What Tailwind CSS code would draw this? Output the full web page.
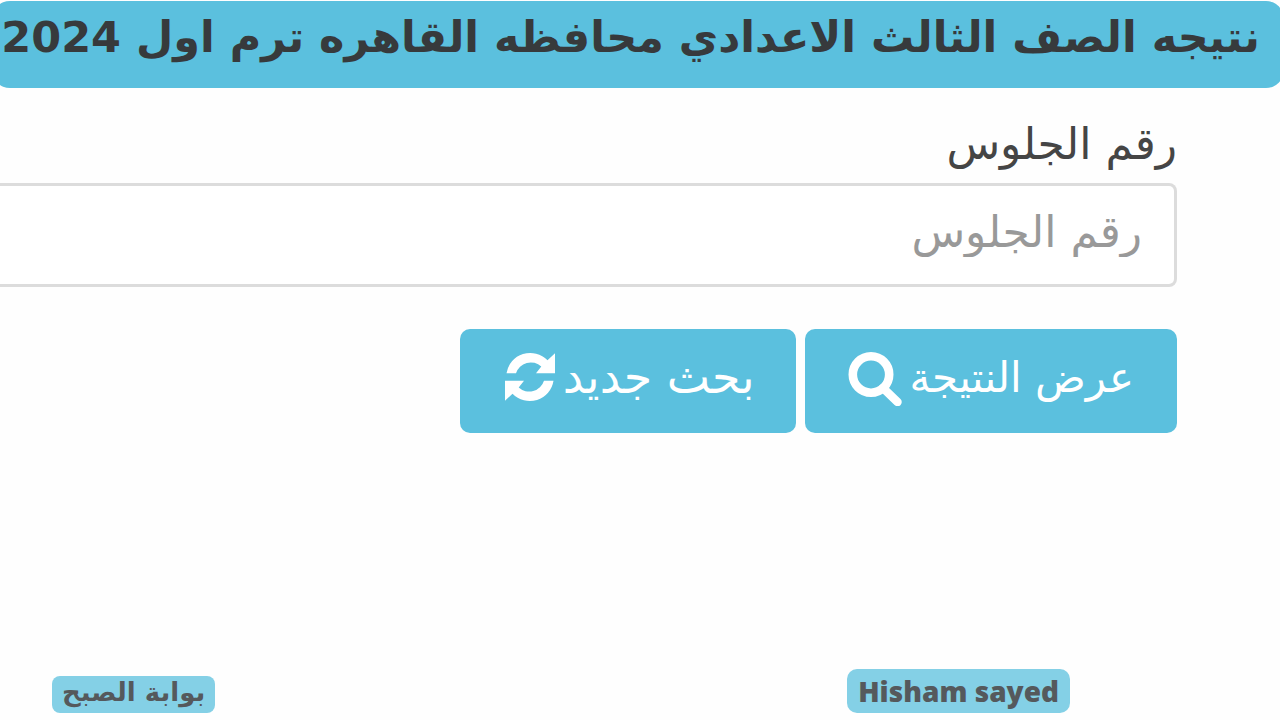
<!DOCTYPE html>
<html lang="ar" dir="rtl">
<head>
  <meta charset="UTF-8" />
  <meta name="viewport" content="width=device-width, initial-scale=1.0"/>
  <title>نتيجه الصف الثالث الاعدادي</title>
  <script src="https://cdn.jsdelivr.net/npm/@tailwindcss/browser@4"></script>
</head>
<body class="bg-[#fefefe] min-h-screen flex flex-col overflow-x-hidden font-['DejaVu_Sans',sans-serif]">

  <header class="mt-px -mr-1 -ml-2 h-[87px] pr-6 pb-4 flex items-center bg-[#5bc0de] rounded-[18px]">
    <h1 class="text-[43px] leading-[60px] font-bold text-[#373a3c] whitespace-nowrap">نتيجه الصف الثالث الاعدادي محافظه القاهره ترم اول 2024</h1>
  </header>

  <main class="flex-1 pr-[103px] pt-8">
    <form id="resultForm">
      <label for="seatNumber" class="block text-[44px] leading-[48px] text-[#454545]">رقم الجلوس</label>
      <input type="text" id="seatNumber" placeholder="رقم الجلوس" class="block mt-[15px] w-full h-[104px] pr-8 pb-2 bg-white border-[3px] border-l-0 border-[#dcdcdc] rounded-r-lg text-[44px] text-[#454545] placeholder:text-[#999999] focus:outline-none"/>

      <div class="mt-[42px] flex gap-[9px]">
        <button type="submit" class="h-[104px] px-[43px] pb-2 flex items-center gap-2 bg-[#5bc0de] text-white rounded-[10px] text-[42px] whitespace-nowrap">
          <span>عرض النتيجة</span>
          <svg class="w-[54px] h-[58px] shrink-0" viewBox="0 -4 54 58" fill="none" stroke="currentColor" aria-hidden="true">
            <circle cx="23" cy="22.5" r="18.2" stroke-width="8.6"/>
            <path d="M35 36L49.5 50" stroke-width="8.5" stroke-linecap="round"/>
          </svg>
        </button>
        <button type="reset" class="h-[104px] pr-[41px] pl-[45px] pb-2 flex items-center gap-2 bg-[#5bc0de] text-white rounded-[10px] text-[46px] whitespace-nowrap">
          <span>بحث جديد</span>
          <svg class="size-[50px] shrink-0" viewBox="0 0 50 50" fill="currentColor" aria-hidden="true">
            <path d="M1.5 21.3A24 24 0 0 1 42.5 8.3L50 1.3V21.3H31L36.3 14.5A15.5 15.5 0 0 0 11 21.3Z"/>
            <path d="M48.5 28.7A24 24 0 0 1 7.5 41.7L0 48.7V28.7H19L13.7 35.5A15.5 15.5 0 0 0 39 28.7Z"/>
          </svg>
        </button>
      </div>
    </form>
  </main>

  <footer class="pr-[210px] pl-[52px] pb-[7px] flex items-end justify-between font-bold text-[#55595c]">
    <span dir="ltr" class="h-[44px] px-[11px] flex items-center bg-[#84d0e6] rounded-[10px] text-[28px] font-black font-['Noto_Sans',sans-serif]">Hisham sayed</span>
    <span class="h-[37px] px-[10px] pb-1 flex items-center bg-[#84d0e6] rounded-lg text-[26px]">بوابة الصبح</span>
  </footer>

</body>
</html>
